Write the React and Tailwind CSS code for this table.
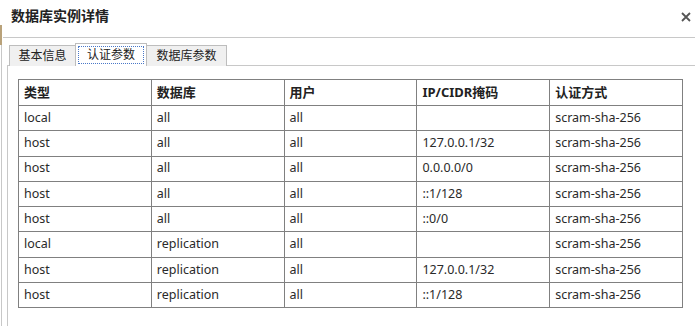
import React from 'react'

const rows = [
  ['local', 'all', 'all', '', 'scram-sha-256'],
  ['host', 'all', 'all', '127.0.0.1/32', 'scram-sha-256'],
  ['host', 'all', 'all', '0.0.0.0/0', 'scram-sha-256'],
  ['host', 'all', 'all', '::1/128', 'scram-sha-256'],
  ['host', 'all', 'all', '::0/0', 'scram-sha-256'],
  ['local', 'replication', 'all', '', 'scram-sha-256'],
  ['host', 'replication', 'all', '127.0.0.1/32', 'scram-sha-256'],
  ['host', 'replication', 'all', '::1/128', 'scram-sha-256'],
]

const heads = ['类型', '数据库', '用户', 'IP/CIDR掩码', '认证方式']

export default function App() {
  return (
    <div
      className="flex w-[695px] h-[326px] overflow-hidden bg-white text-[#222]"
      style={{ fontFamily: '"Noto Sans", "Noto Sans CJK SC", sans-serif' }}
    >
      {/* window edge */}
      <div className="w-[3px] shrink-0 flex flex-col">
        <div className="h-[25px]" />
        <div className="h-[20px] w-[2px] bg-[#b9a27a]" />
        <div className="flex-1 w-[2px] border-l border-[#c8c8c8] ml-[1px]" />
      </div>

      <div className="flex-1 flex flex-col min-w-0">
        {/* title bar */}
        <div className="h-[38px] shrink-0 flex items-center justify-between border-b border-[#c8c8c8] pl-[8px] pr-[4px]">
          <span className="text-[14px] font-bold leading-none pb-[5px]">数据库实例详情</span>
          <svg width="10" height="10" viewBox="0 0 10 10" className="mb-[4px]">
            <path d="M1 1L9 9M9 1L1 9" stroke="#555" strokeWidth="1.8" />
          </svg>
        </div>

        {/* tabs */}
        <div className="pl-[4px] pt-[5px] flex flex-col flex-1">
          <div className="flex items-end pl-[2px] relative z-10 -mb-px">
            <div className="h-[21px] w-[67px] border border-b-0 border-[#bdbdbd] bg-[#f0f0f0] flex items-center justify-center text-[12px] leading-none">
              基本信息
            </div>
            <div className="h-[23px] w-[72px] -ml-px border border-b-0 border-[#bdbdbd] bg-white flex items-center justify-center p-[2px]">
              <div className="w-full h-full border border-dotted border-[#4a78c8] flex items-center justify-center text-[12px] leading-none">
                认证参数
              </div>
            </div>
            <div className="h-[21px] w-[81px] -ml-px border border-b-0 border-[#bdbdbd] bg-[#f0f0f0] flex items-center justify-center text-[12px] leading-none">
              数据库参数
            </div>
          </div>

          <div className="flex-1 border-t border-l border-[#c8c8c8] pl-[10px] pt-[13px]">
            <table className="border-collapse w-[665px] table-fixed text-[12.5px]">
              <thead>
                <tr className="h-[26px]">
                  {heads.map(h => (
                    <th key={h} className="border border-[#808080] text-left font-bold pl-[5px] text-[13px] text-[#222]">
                      {h}
                    </th>
                  ))}
                </tr>
              </thead>
              <tbody>
                {rows.map((r, i) => (
                  <tr key={i} className="h-[25.3px]">
                    {r.map((c, j) => (
                      <td key={j} className="border border-[#808080] pl-[5px] text-[#2a2a2a]">
                        {c}
                      </td>
                    ))}
                  </tr>
                ))}
              </tbody>
            </table>
          </div>
        </div>
      </div>
    </div>
  )
}
